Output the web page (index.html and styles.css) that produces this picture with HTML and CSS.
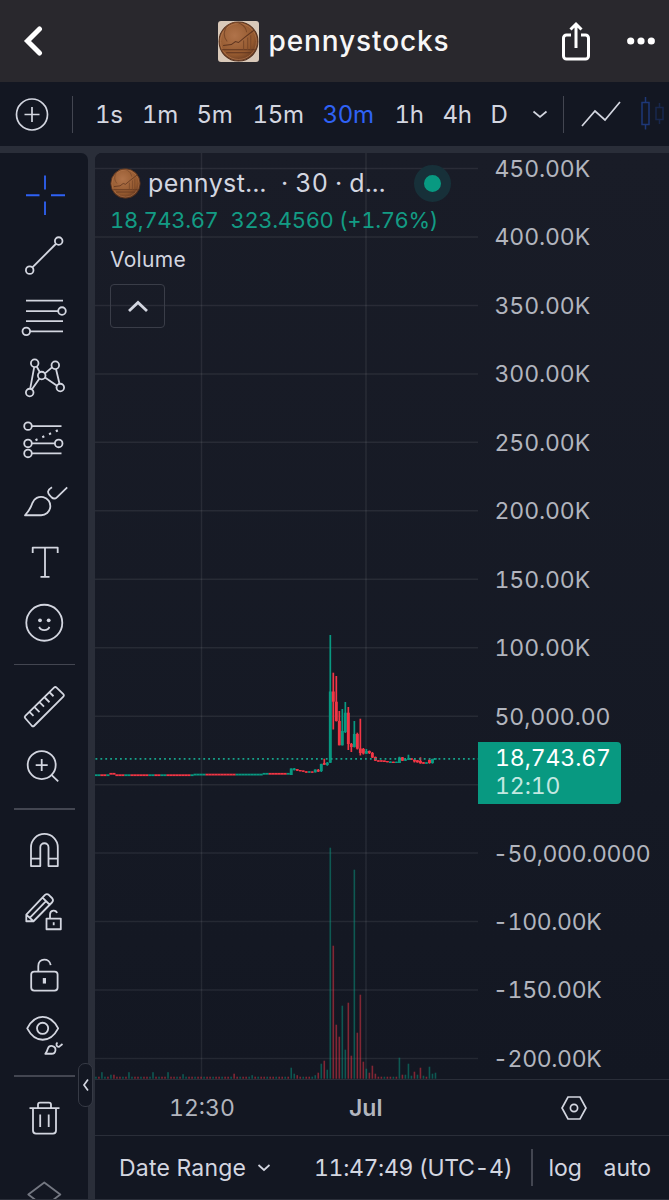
FILE: index.html
```html
<!DOCTYPE html>
<html lang="en">
<head>
    <meta charset="UTF-8">
    <meta name="viewport" content="width=device-width, initial-scale=1.0">
    <title>pennystocks</title>
    <link rel="stylesheet" href="styles.css">
</head>
<body>
    <!-- coin artwork shared by the header and the legend -->
    <svg class="defs" width="0" height="0">
        <defs>
            <radialGradient id="copper" cx="40%" cy="35%" r="70%">
                <stop offset="0" stop-color="#b0734a"></stop>
                <stop offset="0.7" stop-color="#94592f"></stop>
                <stop offset="1" stop-color="#643820"></stop>
            </radialGradient>
            <symbol id="coin" viewBox="0 0 40 40">
                <circle cx="20" cy="20" r="19" fill="url(#copper)" stroke="#54301d"></circle>
                <circle cx="20" cy="20" r="17.500" fill="none" stroke="#b87c52" stroke-width="0.6"></circle>
                <path d="M5 24l8-1 4-3 3 1 6-5 9-7M4 28h32M8 31h24" fill="none" stroke="#5f351f" stroke-width="1"></path>
                <path d="M25 28v-9M29 28v-12M32 28V14M9 20a11 11 0 1 1 19-9" fill="none" stroke="#7a4829" stroke-width="1"></path>
            </symbol>
        </defs>
    </svg>

    <header class="app-header">
        <svg class="back" width="22" height="32" viewBox="0 0 22 32"><path d="M18.500 4L6.500 16l12 12"></path></svg>
        <div class="app-title">
            <span class="avatar"><svg width="41" height="41"><use href="#coin"></use></svg></span>
            <h1>pennystocks</h1>
        </div>
        <div class="app-actions">
            <svg class="share" width="30" height="40" viewBox="0 0 30 40">
                <path d="M10 14H5.500a3 3 0 0 0-3 3v18a3 3 0 0 0 3 3h19a3 3 0 0 0 3-3V17a3 3 0 0 0-3-3H20M15 27V4M9.500 8.500L15 3l5.500 5.500"></path>
            </svg>
            <svg class="more" width="28" height="8" viewBox="0 0 28 8">
                <circle cx="3.700" cy="4" r="3.600"></circle><circle cx="14" cy="4" r="3.600"></circle><circle cx="24.300" cy="4" r="3.600"></circle>
            </svg>
        </div>
    </header>

    <nav class="intervals">
        <svg class="icon add" width="34" height="34" viewBox="0 0 34 34"><circle cx="17" cy="17.500" r="15.500"></circle><path d="M9.500 17.500h15M17 10v15"></path></svg>
        <span class="divider"></span>
        <button class="i-1s">1s</button>
        <button class="i-1m">1m</button>
        <button class="i-5m">5m</button>
        <button class="i-15m">15m</button>
        <button class="i-30m active">30m</button>
        <button class="i-1h">1h</button>
        <button class="i-4h">4h</button>
        <button class="i-d">D</button>
        <svg class="icon caret" width="16" height="10" viewBox="0 0 16 10"><path d="M1.500 2.500L8 8l6.500-5.500"></path></svg>
        <span class="divider"></span>
        <svg class="icon line-type" width="40" height="28" viewBox="0 0 40 28"><path d="M1 26L14 11l10 9L39 2"></path></svg>
        <svg class="candle-type" width="28" height="36" viewBox="0 0 28 36">
            <path d="M2 6.500h7v22H2zM5.500 1v5M5.500 28.500v5"></path>
            <path class="faded" d="M16 11.500h7v12h-7zM19.500 7v4M19.500 24v4"></path>
        </svg>
    </nav>

    <main class="workspace">
        <aside class="tools">
            <svg class="tool selected" viewBox="0 0 88 61"><path d="M45 10.500v14M45 36.500v13.500M26 30.200h13.500M51 30.200h14"></path></svg>
            <svg class="tool" viewBox="0 0 88 61"><circle cx="58.700" cy="15" r="3.800"></circle><circle cx="29.700" cy="44.100" r="3.800"></circle><path d="M56 17.700L32.400 41.400"></path></svg>
            <svg class="tool" viewBox="0 0 88 61"><path d="M26 13.600h37M26 24h32M26 34h37M30 44.300h33"></path><circle cx="62" cy="24" r="3.800"></circle><circle cx="26.300" cy="44.300" r="3.800"></circle></svg>
            <svg class="tool" viewBox="0 0 88 61"><path d="M34.200 19l-4 21.600M36.700 18.500l3 5.500M32 41.300l7.300-10.500M45 25.300l7-6M56 21l3.500 14.700M45 29.400l12 8.200"></path><circle cx="34.700" cy="15.200" r="3.800"></circle><circle cx="55.300" cy="17.200" r="3.800"></circle><circle cx="41.700" cy="27.500" r="3.800"></circle><circle cx="60.300" cy="39.500" r="3.800"></circle><circle cx="29.700" cy="44.500" r="3.800"></circle></svg>
            <svg class="tool" viewBox="0 0 88 61"><path d="M32 17.100h29.500M32 34.400h23M32 44.400h29.500"></path><path class="dots" d="M35.500 31.200L59 20.800"></path><circle cx="28" cy="17.100" r="3.800"></circle><circle cx="28" cy="34.400" r="3.800"></circle><circle cx="58.700" cy="34.400" r="3.800"></circle><circle cx="28" cy="44.400" r="3.800"></circle></svg>
            <svg class="tool" viewBox="0 0 88 61"><path d="M25 45.200H41a9.200 9.200 0 1 0-8.500-12.400C31 37.500 28 42 25 45.200zM52 17.200c-5 3-4.500 5.500-2.500 7.800l2 2.200c2 2 4 1.500 5.700-.2l10-9.600"></path></svg>
            <svg class="tool" viewBox="0 0 88 61"><path d="M32.700 22v-5.500h25V22M45 16.500v29.300M40.500 45.800h9"></path></svg>
            <svg class="tool" viewBox="0 0 88 61"><circle cx="44.300" cy="30.700" r="18"></circle><path d="M39.200 34.800c1.500 4.300 8.700 4.300 10.200 0"></path><circle class="fill" cx="40" cy="28.300" r="1.900"></circle><circle class="fill" cx="48.700" cy="28.300" r="1.900"></circle></svg>
            <hr>
            <svg class="tool" viewBox="0 0 88 61"><path d="M54 11.500L25.300 39.800q-1.200 1.200 0 2.400l6.500 7.500q1.200 1.200 2.400 0L63.300 20.500q1.200-1.200 0-2.400L56.600 11.500q-1.300-1.200-2.600 0zM29.500 35.800l4 4M34.500 31l5 5M39.500 26l4.500 4.500M44.500 21.200l5 5M49.500 16.200l4 4"></path></svg>
            <svg class="tool" viewBox="0 0 88 61"><circle cx="41.700" cy="28" r="14"></circle><path d="M51.700 38l6.500 6.400M35.700 28h12M41.700 22v12"></path></svg>
            <hr>
            <svg class="tool" viewBox="0 0 88 61"><path d="M31 46V27.300a13.400 13.400 0 0 1 26.800 0V46h-9.300V27.300a4.100 4.100 0 0 0-8.200 0V46zM31 38.500h9.300M48.500 38.500h9.300"></path></svg>
            <svg class="tool" viewBox="0 0 88 61"><path d="M26.300 39.200v-6.700L45 12.800q2-1.500 4 .2l3.200 3.200q1.600 2 0 4L33.500 39.200zM26.300 32.500l7.200 6.700M42.500 15.500l7.200 7.200M30 35.500L46 19"></path><path d="M46.500 36.500h14.300v10.700H46.500zM50 36.500v-4c0-5 6-5 7-1.500M53.700 40.300v3"></path></svg>
            <svg class="tool" viewBox="0 0 88 61"><rect x="31.200" y="28.500" width="26.400" height="19" rx="3"></rect><path d="M38.300 28.500v-5.500c0-8.500 11.400-8.500 12.400-1"></path><path class="thick" d="M44.400 35v5.500"></path></svg>
            <svg class="tool" viewBox="0 0 88 61"><path d="M27.200 24.300c8-15.200 23-15.200 31 0-8 15.200-23 15.200-31 0z"></path><circle cx="42.600" cy="24.300" r="5.600"></circle><path d="M45.300 49.700h6.200a3.900 3.900 0 1 0-3.600-5.200q-.8 3-2.600 5.200zM57.500 38.500c-2 1.500-1 4.500 1.500 4.300l3.500-2.800"></path></svg>
            <hr>
            <svg class="tool" viewBox="0 0 88 61"><path d="M29.500 21h30M38 20.500v-3q0-2 2-2h9q2 0 2 2v3M33 21v22.500q0 3 3 3h17q3 0 3-3V21M40.200 27.500v12.500M48.700 27.500v12.500"></path></svg>
            <svg class="tool layers" viewBox="0 0 88 61"><path d="M44.300 34.500l16 12-16 12-16-12z"></path></svg>
        </aside>

        <section class="chart">
            <div class="pane">
                <svg class="plot" width="383" height="926" viewBox="95 153 383 926"></svg>
                <div class="legend">
                    <div class="symbol">
                        <svg width="31" height="31"><use href="#coin"></use></svg>
                        <span class="name">pennyst...</span>
                        <span class="meta">· 30 · d...</span>
                        <span class="status"></span>
                    </div>
                    <div class="values"><span class="last">18,743.67</span><span class="change">323.4560 (+1.76%)</span></div>
                    <div class="study">Volume</div>
                    <button class="collapse"><svg class="icon" width="22" height="14" viewBox="0 0 22 14"><path d="M2 12l9-8.500L20 12"></path></svg></button>
                </div>
            </div>
            <div class="prices">
                <span>450.00K</span>
                <span>400.00K</span>
                <span>350.00K</span>
                <span>300.00K</span>
                <span>250.00K</span>
                <span>200.00K</span>
                <span>150.00K</span>
                <span>100.00K</span>
                <span>50,000.00</span>
                <span></span>
                <span class="negative">-50,000.0000</span>
                <span class="negative">-100.00K</span>
                <span class="negative">-150.00K</span>
                <span class="negative">-200.00K</span>
                <div class="price-tag"><b>18,743.67</b><i>12:10</i></div>
            </div>
            <div class="times">
                <span>12:30</span>
                <strong>Jul</strong>
            </div>
            <div class="settings">
                <svg class="icon" width="28" height="26" viewBox="0 0 28 26"><path d="M8 2h12l6 11-6 11H8L2 13z"></path><circle cx="14" cy="13" r="3.600"></circle></svg>
            </div>
            <footer class="range-bar">
                <span class="date-range">Date Range</span>
                <svg class="icon caret" width="14" height="9" viewBox="0 0 14 9"><path d="M1.500 2L7 7l5.500-5"></path></svg>
                <span class="clock">11:47:49 (UTC-4)</span>
                <span class="divider"></span>
                <span class="log">log</span>
                <span class="auto">auto</span>
            </footer>
        </section>
        <button class="drawer"><svg class="icon" width="8" height="14" viewBox="0 0 8 14"><path d="M6 1.500L2 7l4 5.500"></path></svg></button>
    </main>

    <script>
        const plot = document.querySelector('.plot');
        const STEP = 3.005;
        const ORIGIN = 330.3; // x of the breakout bar (index 0)
        const BASE = 1078.7;

        function add(tag, cls, attrs) {
            const el = document.createElementNS('http://www.w3.org/2000/svg', tag);
            el.setAttribute('class', cls);
            for (const key in attrs) el.setAttribute(key, attrs[key]);
            plot.appendChild(el);
        }

        function bar(cls, x, top, bottom, width) {
            add('rect', cls, { x: x - width / 2, y: top, width: width, height: bottom - top });
        }

        // grid
        for (let i = 0; i < 14; i++) {
            add('path', 'grid', { d: `M95 ${168.5 + i * 68.46}H479` });
        }
        add('path', 'grid', { d: 'M201.5 153V1079M366 153V1079' });

        // volume: index -> signed height, negative means a down bar
        const volume = {
            '-76': 6.5, '-73': 4, '-72': -4, '-67': 6.5, '-59': 6.5, '-54': 6.5, '-49': 4.5, '-32': -5, '-26': 3.5,
            '-13': 11, '-12': 5, '-11': -3.5, '-5': 3.5, '-4': -6, '-3': 15, '-2': -18, '-1': 9,
            0: 231, 1: -133, 2: -54, 3: -42, 4: 73, 5: 29, 6: -76, 7: -23, 8: 209, 9: -46, 10: -84, 11: -17,
            12: 10, 13: -6, 14: -13, 15: -5, 23: 21, 24: -4, 25: 4, 26: 15, 27: 3, 28: -7, 29: 4, 30: -11,
            31: 3, 32: -2, 33: 12, 34: 5, 35: 6
        };
        for (let i = -78; i <= 35; i++) {
            const v = volume[i] || (i % 3 === 0 ? 2 : -2);
            bar(v > 0 ? 'vol up' : 'vol down', ORIGIN + i * STEP, BASE - Math.abs(v), BASE, 1.6);
        }

        // flat stretch before the breakout: one letter per bar
        const flat = 'uudduddddduudddddduudduudddddddduuuuudddddddddduuuuuuuuuuudddddduu';
        for (let i = -78; i < -13; i++) {
            const n = i + 78;
            const y = n === 5 || n === 6 ? 773.8 : n < 33 ? 775.2 : n < 56 ? 774.6 : 773.8;
            bar(flat[n] === 'u' ? 'up' : 'down', ORIGIN + i * STEP, y - 0.9, y + 0.9, 3.1);
        }

        // [direction, high, low, body top, body bottom]
        const candles = [
            [1, 768.5, 775, 768.5, 775], [1, 768, 770.5, 768.5, 770], [0, 769, 771, 769, 770.7], [0, 770, 771.3, 770, 771.3],
            [0, 770.5, 771.8, 770.5, 771.8], [0, 771.3, 772.7, 771.3, 772.7], [1, 771.3, 772.7, 771.3, 772.7], [0, 771.5, 772.7, 771.5, 772.7],
            [1, 769.5, 772.5, 769.5, 772.3], [0, 769, 772, 770, 771.5], [1, 763.7, 772, 764, 771], [0, 758.7, 764.8, 763, 764.8],
            [1, 762, 765.8, 762.7, 765], [1, 635, 763, 691.5, 762.7], [0, 672.7, 729.5, 691.5, 701.7], [0, 676, 721.5, 701.7, 721],
            [0, 711, 745.3, 721, 745.3], [1, 709, 745.5, 731, 745.3], [1, 702, 733, 712.7, 732], [0, 707, 750, 712.7, 744],
            [0, 743, 752, 744, 747], [1, 721, 747.5, 734, 747], [0, 732.7, 749.5, 734, 748.7], [0, 718.7, 755.5, 748.5, 753],
            [0, 748, 754.5, 749, 753.5], [1, 749, 754, 751, 753.7], [0, 750.5, 754, 751, 753], [0, 752, 758, 753, 757.5],
            [0, 756.5, 761, 757, 760.7], [0, 760.3, 761.7, 760.3, 761.7], [0, 760.3, 761.7, 760.3, 761.7], [0, 760.5, 762, 760.5, 762],
            [0, 761, 762.3, 761, 762.3], [1, 761.5, 763, 761.5, 763], [0, 761.7, 763, 761.7, 763], [1, 761.7, 763, 761.7, 763],
            [1, 756.7, 763, 757.5, 763], [0, 757, 761, 757.3, 760.7], [1, 759, 761, 759.3, 760.7], [1, 754.7, 760, 758.3, 759.7],
            [0, 758.3, 760, 758.3, 759.7], [0, 759.3, 762.5, 759.7, 761.5], [0, 760, 762.7, 760.3, 762.3], [0, 757.3, 763.7, 761, 763.3],
            [0, 762, 763.7, 762.3, 763.7], [1, 762.3, 763.7, 762.3, 763.7], [0, 759.3, 763.7, 760, 763], [1, 758.7, 763.7, 759, 763],
            [1, 758.3, 759.5, 758.3, 759.5]
        ];
        candles.forEach(([up, high, low, top, bottom], n) => {
            const x = ORIGIN + (n - 13) * STEP;
            const cls = up ? 'up' : 'down';
            bar(cls, x, high, low, 1.7);
            bar(cls, x, top, bottom, 2.9);
        });

        add('path', 'last-price', { d: 'M95.5 758.8H478' });
    </script>
</body>
</html>
```
FILE: styles.css
```css
* {
    margin: 0;
    padding: 0;
    box-sizing: border-box;
}

body {
    width: 669px;
    height: 1200px;
    overflow: hidden;
    background: #2a2e39;
    color: #d3d6e0;
    font-family: Inter, "Liberation Sans", sans-serif;
    font-size: 24px;
    font-variant-numeric: tabular-nums;
}

button {
    background: none;
    border: none;
    color: inherit;
    font: inherit;
    font-variant-numeric: tabular-nums;
}

svg {
    display: block;
    flex: none;
}

.defs {
    position: absolute;
}

.icon {
    fill: none;
    stroke: #d3d6e0;
    stroke-width: 1.7;
}

.divider {
    width: 1.5px;
    height: 37px;
    background: #434651;
    flex: none;
}

/* App header */
.app-header {
    height: 82px;
    background: #29282d;
    display: flex;
    align-items: center;
    justify-content: space-between;
    padding: 0 14px 0 21px;
}

.back {
    fill: none;
    stroke: #fff;
    stroke-width: 5;
    stroke-linecap: round;
}

.app-title {
    display: flex;
    align-items: center;
    gap: 9px;
    margin-left: 64px;
}

.avatar {
    width: 41px;
    height: 41px;
    background: #d9c9b9;
    border-radius: 3px;
    overflow: hidden;
}

.app-title h1 {
    color: #f7f7f7;
    font-size: 28px;
    font-weight: 500;
    letter-spacing: 0.9px;
    white-space: nowrap;
}

.app-actions {
    display: flex;
    align-items: center;
    gap: 36px;
}

.share {
    fill: none;
    stroke: #fff;
    stroke-width: 3;
}

.more {
    fill: #fff;
}

/* Interval toolbar */
.intervals {
    height: 64px;
    background: #131722;
    display: flex;
    align-items: center;
    padding-left: 14.5px;
    overflow: hidden;
}

.intervals button {
    flex: none;
    text-align: left;
    white-space: nowrap;
    letter-spacing: -0.3px;
}

.intervals .add {
    margin-right: 23px;
}

.intervals .active {
    color: #2f62f5;
}

.i-1s { width: 47px; margin-left: 22px; }
.i-1m { width: 54.5px; }
.i-5m { width: 56px; }
.i-15m { width: 70px; }
.i-30m { width: 72px; }
.i-1h { width: 48px; }
.i-4h { width: 48px; }
.i-d { width: 41px; }

.intervals .caret {
    margin-right: 15px;
}

.line-type {
    margin-left: 17px;
}

.candle-type {
    margin-left: 18.5px;
    fill: none;
    stroke: #1e3878;
    stroke-width: 1.5;
}

.faded {
    opacity: 0.5;
}

/* Drawing tools */
.workspace {
    position: relative;
    height: 1046px;
    margin-top: 7px;
    display: flex;
    gap: 7px;
}

.tools {
    width: 88px;
    background: #131722;
    border-top-right-radius: 7px;
    padding-top: 11.5px;
    overflow: hidden;
}

.tool {
    width: 88px;
    height: 61.1px;
    fill: none;
    stroke: #d3d6e0;
    stroke-width: 1.8;
    stroke-linejoin: round;
}

.tool.selected {
    stroke: #2f62f5;
}

.tool .dots {
    stroke-width: 2.2;
    stroke-dasharray: 2.2 5.2;
}

.tool .fill {
    fill: #d3d6e0;
    stroke: none;
}

.tool .thick {
    stroke-width: 3.2;
}

.tool.layers {
    opacity: 0.5;
}

.tools hr {
    width: 61px;
    height: 1.5px;
    margin: 10.5px 0 10.5px 14px;
    border: none;
    background: #434651;
}

/* Chart */
.chart {
    width: 574px;
    height: 1046px;
    background: #131722;
    border-top-left-radius: 7px;
    overflow: hidden;
    display: grid;
    grid-template: 927px 55px 64px / 383px 191px;
}

.pane {
    display: grid;
    background: linear-gradient(#191c27, #151924 70%, #131722);
    border-bottom: 1.5px solid #2a2e39;
}

.plot,
.legend {
    grid-area: 1 / 1;
}

.grid {
    stroke: #fff;
    stroke-opacity: 0.075;
    stroke-width: 1.5;
}

.up {
    fill: #089981;
}

.down {
    fill: #f23645;
}

.vol {
    opacity: 0.5;
}

.last-price {
    stroke: #16a38b;
    stroke-width: 1.8;
    stroke-dasharray: 1.8 3.1;
}

.legend {
    padding: 11px 0 0 15px;
    align-self: start;
}

.symbol {
    height: 38px;
    display: flex;
    align-items: center;
    font-size: 25px;
}

.symbol .name {
    width: 133px;
    margin-left: 7px;
    letter-spacing: 0.4px;
}

.symbol .meta {
    width: 133px;
    white-space: nowrap;
    letter-spacing: 0.2px;
}

.status {
    width: 37px;
    height: 37px;
    border: 10px solid #173039;
    border-radius: 50%;
    background: #089981;
}

.values {
    height: 38px;
    line-height: 37px;
    color: #139b84;
    font-size: 22px;
    letter-spacing: -0.35px;
    white-space: nowrap;
}

.values .change {
    margin-left: 12px;
}

.study {
    height: 39px;
    line-height: 39px;
    font-size: 21px;
    letter-spacing: 0.3px;
}

.collapse {
    width: 55px;
    height: 44px;
    margin-top: 5px;
    border: 1.5px solid #3a3d48;
    border-radius: 4px;
    display: flex;
    align-items: center;
    justify-content: center;
}

.collapse .icon {
    stroke-width: 2.8;
}

.prices {
    position: relative;
    padding-left: 16.5px;
    background: linear-gradient(#191c27, #151924 70%, #131722);
    border-bottom: 1.5px solid #2a2e39;
    color: #b2b5be;
    font-size: 23px;
    letter-spacing: -0.1px;
}

.prices span {
    display: block;
    height: 68.46px;
    line-height: 32px;
}

.prices .negative {
    margin-left: -1.5px;
    letter-spacing: -0.35px;
}

/* sits on the axis at the last traded price */
.price-tag {
    position: absolute;
    left: 0;
    top: 588.5px;
    width: 143px;
    height: 62px;
    padding: 2px 0 0 17px;
    background: #089981;
    border-radius: 0 4px 4px 0;
    color: #fff;
}

.price-tag b,
.price-tag i {
    display: block;
    line-height: 28px;
    font-weight: 400;
    font-style: normal;
}

.price-tag i {
    color: #c3e8e1;
}

.times {
    display: flex;
    align-items: center;
    padding-left: 74px;
    color: #b2b5be;
    font-size: 23px;
}

.times span {
    width: 180px;
}

.times strong {
    font-weight: 600;
}

.settings {
    display: flex;
    align-items: center;
    justify-content: center;
}

.range-bar {
    grid-column: 1 / 3;
    border-top: 1.5px solid #2a2e39;
    display: flex;
    align-items: center;
    padding-left: 24px;
    font-size: 23px;
    white-space: nowrap;
}

.date-range { width: 138px; letter-spacing: 0.2px; }
.clock { width: 217px; margin-left: 43px; letter-spacing: -0.35px; }
.log { width: 55px; margin-left: 16px; }

/* Handle that hides the tool column */
.drawer {
    position: absolute;
    left: 78px;
    top: 910px;
    width: 15px;
    height: 44px;
    border: 1.5px solid #363a45;
    border-radius: 7px;
    background: #131722;
    display: flex;
    align-items: center;
    justify-content: center;
}
```
